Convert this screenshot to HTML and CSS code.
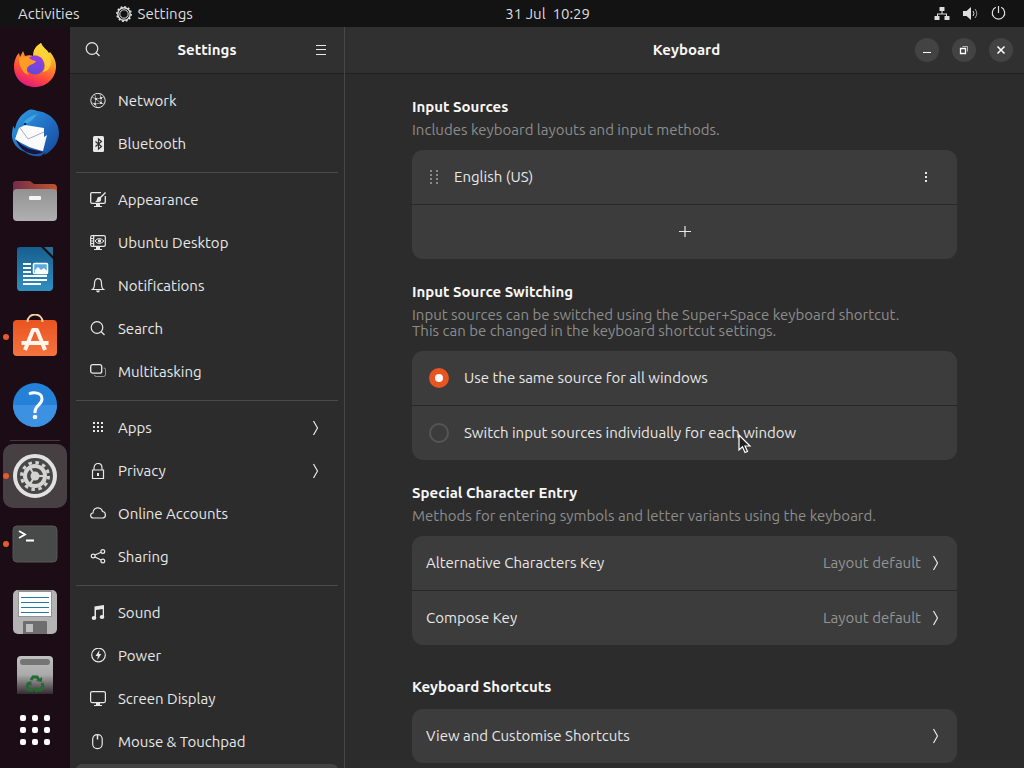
FILE: index.html
```
<!DOCTYPE html>
<html lang="en">
<head>
    <meta charset="UTF-8">
    <meta name="viewport" content="width=device-width, initial-scale=1.0">
    <title>Settings - Keyboard</title>
    <link rel="stylesheet" href="styles.css">
</head>
<body>
    <!-- Shared icons -->
    <svg class="sprite" aria-hidden="true">
        <symbol id="chevron" viewBox="0 0 8 16"><path d="M1.500 1l4 7-4 7" fill="none" stroke="currentColor" stroke-width="1.2"/></symbol>
        <symbol id="search" viewBox="0 0 16 16"><g fill="none" stroke="currentColor" stroke-width="1.2"><circle cx="7" cy="6.5" r="5.8"/><path d="M11 10.5l3.5 3.5"/></g></symbol>
    </svg>

    <header class="topbar">
        <div class="topbar-left">
            <button class="plain">Activities</button>
            <button class="plain app-menu">
                <svg width="16" height="16" viewBox="0 0 16 16" fill="none" stroke="currentColor"><circle cx="8" cy="8" r="6.2" stroke-width="1.4"/><circle cx="8" cy="8" r="4.2"/><circle cx="8" cy="8" r="7.2" stroke-width="1.5" stroke-dasharray="1.9 1.87"/></svg>
                Settings
            </button>
        </div>
        <button class="plain clock">31 Jul  10:29</button>
        <div class="topbar-right">
            <svg width="16" height="16" viewBox="0 0 16 16" fill="currentColor"><rect x="5.5" y="1" width="5" height="4" rx=".5"/><rect x=".5" y="10" width="5" height="4" rx=".5"/><rect x="10.5" y="10" width="5" height="4" rx=".5"/><path d="M7.5 5h1v2.500H13V10h-1V8.500H4V10H3V7.500h4.500z"/></svg>
            <svg width="16" height="16" viewBox="0 0 16 16"><path d="M1 5h3.500L9 1v13l-4.500-4H1z" fill="currentColor"/><g fill="none" stroke="currentColor"><path d="M11 5q2 2.500 0 5"/><path d="M13 3q3.500 4.500 0 9" stroke-opacity=".7"/></g></svg>
            <svg width="16" height="16" viewBox="0 0 16 16" fill="none" stroke="currentColor" stroke-width="1.2"><path d="M8.500 0v7M5.800 1.300a6.200 6.200 0 1 0 5.400 0"/></svg>
        </div>
    </header>

    <div class="desktop">
        <nav class="dock" aria-label="Dock">
            <button class="dock-item" aria-label="Firefox">
                <svg width="44" height="44" viewBox="0 0 44 44">
                    <defs>
                        <linearGradient id="fx" x1=".75" y1="0" x2=".3" y2="1"><stop offset="0" stop-color="#fff44f"/><stop offset=".35" stop-color="#ff9a26"/><stop offset=".7" stop-color="#ff4a3c"/><stop offset="1" stop-color="#e31587"/></linearGradient>
                        <linearGradient id="fxc" x1=".6" y1="0" x2=".4" y2="1"><stop offset="0" stop-color="#9a3de0"/><stop offset="1" stop-color="#5b4bd8"/></linearGradient>
                    </defs>
                    <path d="M28 0c2 5 6 6 8 10l1-1c4 5 6 9 6 14 0 12-9 21-21 21S1 35 1 24c0-6 2-11 5-14l1 4 3-6 2 5c3-1 6-1 8 0 0-6 3-10 8-13z" fill="url(#fx)"/>
                    <circle cx="22" cy="22" r="9.5" fill="url(#fxc)"/>
                    <path d="M28 0c-5 3-8 7-7 12 4 0 8 2 9 5 3 5 2 9 0 12 5-1 8-5 8-10 0-4-1-6-3-9-3-4-6-6-7-10z" fill="#ffd63a" opacity=".85"/>
                    <path d="M6 15c4-3 9-1 13 2l4 1c-1 3-5 3-7 5-3 2-3 6 0 9-7-2-10-9-10-17z" fill="#ff9b27"/>
                </svg>
            </button>
            <button class="dock-item" aria-label="Thunderbird">
                <svg width="48" height="48" viewBox="0 0 48 48">
                    <defs><linearGradient id="tb" x1="0" y1="0" x2="1" y2="1"><stop offset="0" stop-color="#2fa0e8"/><stop offset=".6" stop-color="#1f68bd"/><stop offset="1" stop-color="#174593"/></linearGradient></defs>
                    <path d="M16 2c4-3 8-1 10 0 12 1 22 10 22 22 0 11-8 19-15 22l2-3-5 4c-5 1-11 0-16-4C5 40 0 32 1 24l1-7 2 3c1-7 5-14 12-18z" fill="url(#tb)"/>
                    <path d="M4 27c3 7 9 11 15 13l13 3c-7 4-15 2-21-3-4-4-6-8-7-13z" fill="#1a1436"/>
                    <path d="M8 19l6-3 19 3v9l3-2-4 16c-9-2-18-5-28-12z" fill="#fbfbfc"/>
                    <path d="M9 19l8 11 16-7" fill="none" stroke="#a9acb8"/>
                    <path d="M12 15c2-5 7-8 15-10-4 3-5 6-10 9z" fill="#3fa6e0"/><circle cx="14" cy="15" r="1.3" fill="#102b52"/>
                </svg>
            </button>
            <button class="dock-item" aria-label="Files">
                <svg width="46" height="44" viewBox="0 0 46 44">
                    <defs><linearGradient id="fold"><stop offset="0" stop-color="#742d48"/><stop offset="1" stop-color="#c3532f"/></linearGradient><linearGradient id="fg" x2="0" y2="1"><stop offset="0" stop-color="#929292"/><stop offset="1" stop-color="#b0b0b0"/></linearGradient></defs>
                    <path d="M1 5q0-3 3-3h14l4 3h19q4 0 4 4v10H1z" fill="url(#fold)"/>
                    <rect x="1" y="10" width="44" height="32" rx="4" fill="url(#fg)"/><rect x="17" y="17" width="12" height="4" rx="1" fill="#f5f5f5"/>
                </svg>
            </button>
            <button class="dock-item" aria-label="LibreOffice Writer">
                <svg width="38" height="46" viewBox="0 0 38 46">
                    <defs><linearGradient id="wr" x2="0" y2="1"><stop offset="0" stop-color="#155f8f"/><stop offset="1" stop-color="#308fc0"/></linearGradient></defs>
                    <path d="M4 1h21l12 12v28q0 4-4 4H4q-3 0-3-4V4q0-3 3-3z" fill="url(#wr)"/><path d="M28 1h9v9z" fill="#276d96"/>
                    <path d="M7 18h8M7 22h8M7 26h8M7 30h24M7 34h24M7 38h18" stroke="#fff" stroke-width="2"/>
                    <rect x="17.5" y="17.5" width="14" height="10" rx="1" fill="#5ba8e2" stroke="#fff" stroke-width="1.5"/><path d="M19 27v-3l3-3 3 3 3-2 3 3v2z" fill="#fff"/>
                </svg>
            </button>
            <button class="dock-item running" aria-label="Ubuntu Software">
                <svg width="46" height="46" viewBox="0 0 46 46">
                    <defs><linearGradient id="sw" x2="0" y2="1"><stop offset="0" stop-color="#e95420"/><stop offset="1" stop-color="#f4743f"/></linearGradient></defs>
                    <rect x="1" y="6" width="44" height="36" rx="4" fill="url(#sw)"/>
                    <path d="M15.500 8c0-10 15-10 15 0" fill="none" stroke="#f4cda2" stroke-width="2"/>
                    <path d="M13 36l8-20h4l8 20M9.500 29h27" fill="none" stroke="#fff5ec" stroke-width="4" stroke-linejoin="round"/>
                </svg>
            </button>
            <button class="dock-item" aria-label="Help">
                <svg width="46" height="46" viewBox="0 0 46 46">
                    <circle cx="23" cy="23" r="22" fill="#2580d8"/><path d="M1 23h44a22 22 0 0 1-44 0z" fill="#3d91e2"/>
                    <path d="M17 12c4-2 13-2 13 5 0 6-7 6-7 13v1" fill="none" stroke="#fff" stroke-width="3"/><circle cx="23" cy="35" r="2.3" fill="#fff"/>
                </svg>
            </button>
            <hr class="dock-separator">
            <button class="dock-item running focused" aria-label="Settings">
                <svg width="46" height="46" viewBox="0 0 46 46" fill="none">
                    <circle cx="23" cy="23" r="20" fill="#484748" stroke="#e2e1e1" stroke-width="4"/>
                    <circle cx="23" cy="23" r="13.5" stroke="#d4d4d2" stroke-width="3" stroke-dasharray="3.5 3.57"/>
                    <circle cx="23" cy="23" r="10" stroke="#d4d4d2" stroke-width="4"/>
                    <circle cx="23" cy="23" r="4.5" fill="#d4d4d2"/>
                    <path d="M23 23h9M23 23l-5-8M23 23l-5 8" stroke="#d4d4d2" stroke-width="2"/>
                </svg>
            </button>
            <button class="dock-item running" aria-label="Terminal">
                <svg width="46" height="38" viewBox="0 0 46 38">
                    <rect x="1" y="1" width="44" height="36" rx="4" fill="#484a49" stroke="#555"/>
                    <path d="M7 6l6 3.500L7 13M14 15.500h8" fill="none" stroke="#fff" stroke-width="1.8"/>
                </svg>
            </button>
            <button class="dock-item" aria-label="Floppy disk">
                <svg width="46" height="46" viewBox="0 0 46 46">
                    <rect x="1" y="1" width="44" height="44" rx="5" fill="#b4b3b3"/><path d="M6 1h34v27H6z" fill="#929292"/><path d="M7 3h32v24H7z" fill="#fff"/>
                    <path d="M9 8.500h28M9 13.500h28M9 18.500h28M9 23.500h28" stroke="#257ba3"/>
                    <path d="M11 33q0-1 1-1h22q1 0 1 1v12H11z" fill="#6e6e6e"/><path d="M14 35h7v8h-7z" fill="#bdbdbd"/>
                </svg>
            </button>
            <button class="dock-item trash" aria-label="Trash">
                <svg width="38" height="39" viewBox="0 0 38 39">
                    <defs><linearGradient id="tr" x2="0" y2="1"><stop offset="0" stop-color="#c2c1c1"/><stop offset=".5" stop-color="#aaa"/><stop offset="1" stop-color="#332b30"/></linearGradient></defs>
                    <path d="M1 39V5q0-4 4-4h28q4 0 4 4v34z" fill="url(#tr)"/><rect x="4" y="4" width="30" height="6" rx="3" fill="#747474"/>
                    <path d="M15 25l2-3h4l2 3M26 28l1 3-2 4h-4M17 35h-4l-2-4 2-3" fill="none" stroke="#256b31" stroke-width="3"/><path d="M20 26l6 1v-5zM21 32v6l-3-3zM10 28l5-2 1 5z" fill="#256b31"/>
                </svg>
            </button>
            <button class="dock-item" aria-label="Show Applications">
                <svg width="32" height="32" viewBox="0 0 32 32" fill="#fff"><rect x="1" y="1" width="6" height="6" rx="2"/><rect x="13" y="1" width="6" height="6" rx="2"/><rect x="25" y="1" width="6" height="6" rx="2"/><rect x="1" y="13" width="6" height="6" rx="2"/><rect x="13" y="13" width="6" height="6" rx="2"/><rect x="25" y="13" width="6" height="6" rx="2"/><rect x="1" y="25" width="6" height="6" rx="2"/><rect x="13" y="25" width="6" height="6" rx="2"/><rect x="25" y="25" width="6" height="6" rx="2"/></svg>
            </button>
        </nav>

        <aside class="sidebar">
            <div class="headerbar">
                <button class="plain" aria-label="Search"><svg width="16" height="16"><use href="#search"/></svg></button>
                <h1>Settings</h1>
                <button class="plain menu-btn" aria-label="Menu"><svg width="16" height="16" viewBox="0 0 16 16" stroke="currentColor"><path d="M3 3.500h10M3 7.500h10M3 12.500h10"/></svg></button>
            </div>
            <nav class="panels" aria-label="Settings panels">
                <a href="#"><svg width="16" height="16" viewBox="0 0 16 16" fill="none" stroke="currentColor"><circle cx="8" cy="7.5" r="7.2"/><path d="M2 4l4 2 5-1 3-1M6 6l-1 5 6-1V5M2 10l3 1 2 4M11 10l3 1M6 6l5 4M5 2l1 4M10 1l1 4" stroke-width=".6"/><g fill="currentColor" stroke="none"><circle cx="6" cy="6" r="1.1"/><circle cx="11" cy="5" r="1.1"/><circle cx="5" cy="11" r="1.1"/><circle cx="11" cy="10" r="1.1"/></g></svg>Network</a>
                <a href="#"><svg width="16" height="16" viewBox="0 0 16 16"><rect x="3" width="11" height="16" rx="1.5" fill="currentColor"/><path d="M5.500 5.500l6 5-3 2.500V3l3 2.500-6 5" fill="none" stroke="#2c2c2c" stroke-width="1.2"/></svg>Bluetooth</a>
                <hr>
                <a href="#"><svg width="16" height="16" viewBox="0 0 16 16"><path d="M11 .7H2Q.7.700.7 2v8q0 1.300 1.300 1.300h12q1.300 0 1.300-1.300V4" fill="none" stroke="currentColor" stroke-width="1.3"/><path d="M6 12h4v2h2v1H4v-1h2zM15 0l1 1-5 5q1 4-3 4H5q2-1 2-3 1-3 3-2z" fill="currentColor"/></svg>Appearance</a>
                <a href="#"><svg width="16" height="16" viewBox="0 0 16 16"><path d="M2 .7h12q1.300 0 1.300 1.300v8q0 1.300-1.300 1.300H2Q.7 11.300.7 10V2Q.7.700 2 .7zM3.700 1v10M1 3.500h3M1 6h3M1 8.500h3" fill="none" stroke="currentColor" stroke-width="1.2"/><path d="M5 6q4-5 9 0-5 5-9 0z" fill="none" stroke="currentColor"/><circle cx="9.5" cy="6" r="1.7" fill="currentColor"/><path d="M6 12h4v2h2v1H4v-1h2z" fill="currentColor"/></svg>Ubuntu Desktop</a>
                <a href="#"><svg width="16" height="16" viewBox="0 0 16 16"><path d="M2.500 11.500c1.500-1 2-3 2-6C4.500 2 6 .7 8 .7S11.500 2 11.500 5.500c0 3 .5 5 2 6z" fill="none" stroke="currentColor" stroke-width="1.2"/><path d="M6 12.500h4q-.5 2-2 2t-2-2z" fill="currentColor"/></svg>Notifications</a>
                <a href="#"><svg width="16" height="16"><use href="#search"/></svg>Search</a>
                <a href="#"><svg width="16" height="16" viewBox="0 0 16 16" fill="none" stroke="currentColor"><path d="M13.500 4h.5q1.500 0 1.500 1.500v5q0 2-2 2h-7q-2 0-2-1.500" opacity=".55"/><rect x=".7" y=".7" width="11" height="8.5" rx="2" stroke-width="1.3"/></svg>Multitasking</a>
                <hr>
                <a href="#"><svg width="16" height="16" viewBox="0 0 16 16" fill="currentColor"><path d="M3 2h2v2H3zM7 2h2v2H7zM11 2h2v2h-2zM3 6h2v2H3zM7 6h2v2H7zM11 6h2v2h-2zM3 10h2v2H3zM7 10h2v2H7zM11 10h2v2h-2z"/></svg>Apps<svg class="chevron" width="8" height="16"><use href="#chevron"/></svg></a>
                <a href="#"><svg width="16" height="16" viewBox="0 0 16 16" fill="none" stroke="currentColor" stroke-width="1.2"><path d="M2.500 7h11v8.500h-11zM4 7V5c0-6 8-6 8 0v2"/><path d="M8 10v3" stroke-width="2"/></svg>Privacy<svg class="chevron" width="8" height="16"><use href="#chevron"/></svg></a>
                <a href="#"><svg width="16" height="16" viewBox="0 0 16 16" fill="none" stroke="currentColor" stroke-width="1.2"><path d="M3.500 12C0 12-.3 7.300 3 7c0-6 8-7 9.500-1.500C16.500 6 16.300 12 12.500 12z"/></svg>Online Accounts</a>
                <a href="#"><svg width="16" height="16" viewBox="0 0 16 16" fill="none" stroke="currentColor" stroke-width="1.2"><circle cx="3.2" cy="7" r="1.9"/><circle cx="12.8" cy="2.5" r="1.9"/><circle cx="12.8" cy="12" r="1.9"/><path d="M5 6l6-2.800M5 8l6 3"/></svg>Sharing</a>
                <hr>
                <a href="#"><svg width="16" height="16" viewBox="0 0 16 16" fill="currentColor"><path d="M4.500 1.500L14 0v12h-1.300V4L6 5v9H4.500z"/><ellipse cx="4" cy="13" rx="2.3" ry="2"/><ellipse cx="12" cy="12" rx="2.3" ry="2"/></svg>Sound</a>
                <a href="#"><svg width="16" height="16" viewBox="0 0 16 16"><circle cx="8.5" cy="7" r="6.8" fill="none" stroke="currentColor" stroke-width="1.2"/><path d="M9.500 2l-4 6h2.300l-.5 4 4-6H9z" fill="currentColor"/></svg>Power</a>
                <a href="#"><svg width="16" height="16" viewBox="0 0 16 16"><rect x=".6" y=".6" width="14.8" height="11" rx="1.5" fill="none" stroke="currentColor" stroke-width="1.2"/><path d="M6 12h4v2h2v1H4v-1h2z" fill="currentColor"/></svg>Screen Display</a>
                <a href="#"><svg width="16" height="16" viewBox="0 0 16 16" fill="none" stroke="currentColor"><rect x="2.7" y=".6" width="9.5" height="14" rx="4.5" stroke-width="1.2"/><path d="M7.500 1v4.500" stroke-width="1.5"/></svg>Mouse &amp; Touchpad</a>
                <a href="#" class="selected" aria-current="page" aria-label="Keyboard"></a>
            </nav>
        </aside>

        <main class="window">
            <div class="headerbar">
                <span></span>
                <h1>Keyboard</h1>
                <div class="window-controls">
                    <button aria-label="Minimise"><svg width="24" height="24" viewBox="0 0 24 24" stroke="currentColor"><path d="M8 14.500h8"/></svg></button>
                    <button aria-label="Restore"><svg width="24" height="24" viewBox="0 0 24 24" fill="none" stroke="currentColor"><path d="M10.500 8.500h5v5" opacity=".6"/><path d="M8.500 10.500h5v5h-5z" stroke-width="1.3"/></svg></button>
                    <button aria-label="Close"><svg width="24" height="24" viewBox="0 0 24 24" stroke="currentColor" stroke-width="1.5"><path d="M8.500 8.500l7 7M15.500 8.500l-7 7"/></svg></button>
                </div>
            </div>

            <div class="content">
                <section class="group">
                    <h2>Input Sources</h2>
                    <p>Includes keyboard layouts and input methods.</p>
                    <div class="card">
                        <div class="row source">
                            <svg width="10" height="16" viewBox="0 0 10 16" fill="#8a8a8a"><path d="M1 1h2v2H1zM7 1h2v2H7zM1 5h2v2H1zM7 5h2v2H7zM1 9h2v2H1zM7 9h2v2H7zM1 13h2v2H1zM7 13h2v2H7z"/></svg>
                            <span>English (US)</span>
                            <button class="plain end" aria-label="More options"><svg width="16" height="16" viewBox="0 0 16 16" fill="currentColor"><path d="M7 3h2v2H7zM7 7h2v2H7zM7 11h2v2H7z"/></svg></button>
                        </div>
                        <button class="row add" aria-label="Add input source"><svg width="16" height="16" viewBox="0 0 16 16" stroke="currentColor"><path d="M2 7.500h12M8 2v11" stroke-width="1.2"/></svg></button>
                    </div>
                </section>

                <section class="group">
                    <h2>Input Source Switching</h2>
                    <p>Input sources can be switched using the Super+Space keyboard shortcut.<br>This can be changed in the keyboard shortcut settings.</p>
                    <div class="card">
                        <label class="row option"><input type="radio" name="switching" checked>Use the same source for all windows</label>
                        <label class="row option"><input type="radio" name="switching">Switch input sources individually for each window</label>
                    </div>
                </section>

                <section class="group">
                    <h2>Special Character Entry</h2>
                    <p>Methods for entering symbols and letter variants using the keyboard.</p>
                    <div class="card">
                        <button class="row">Alternative Characters Key<span class="value end">Layout default</span><svg width="8" height="16"><use href="#chevron"/></svg></button>
                        <button class="row">Compose Key<span class="value end">Layout default</span><svg width="8" height="16"><use href="#chevron"/></svg></button>
                    </div>
                </section>

                <section class="group shortcuts">
                    <h2>Keyboard Shortcuts</h2>
                    <div class="card">
                        <button class="row">View and Customise Shortcuts<svg class="end" width="8" height="16"><use href="#chevron"/></svg></button>
                    </div>
                </section>
            </div>
        </main>
    </div>

    <svg class="pointer" width="14" height="20" viewBox="0 0 14 20" aria-hidden="true"><path d="M1 1v15l3.500-3.200L7 18.500l2.500-1L7 12h5z" fill="#222" stroke="#fff" stroke-width="1.2"/></svg>
</body>
</html>
```
FILE: styles.css
```
* {
    margin: 0;
    padding: 0;
    box-sizing: border-box;
}

body {
    height: 100vh;
    display: flex;
    flex-direction: column;
    overflow: hidden;
    background-color: #2c2c2c;
    color: #e8e8e8;
    font-family: Ubuntu, 'Open Sans', 'Noto Sans', sans-serif;
    font-size: 15px;
    line-height: 20px;
}

button {
    border: none;
    background: none;
    color: inherit;
    font: inherit;
}

a {
    color: inherit;
    text-decoration: none;
}

svg {
    display: block;
    flex: none;
}

.sprite {
    position: absolute;
    width: 0;
    height: 0;
}

/* Top bar */
.topbar {
    flex: none;
    height: 27px;
    padding: 0 18px;
    display: flex;
    align-items: center;
    background-color: #131313;
    color: #dedede;
}

.topbar-left {
    flex: 1;
    display: flex;
    gap: 36px;
}

.app-menu {
    display: flex;
    align-items: center;
    gap: 6px;
}

.clock {
    white-space: pre;
}

.topbar-right {
    width: 416px;
    display: flex;
    justify-content: flex-end;
    gap: 12px;
}

.desktop {
    flex: 1;
    min-height: 0;
    display: flex;
}

/* Dock */
.dock {
    flex: none;
    width: 70px;
    padding: 4px 3px;
    display: flex;
    flex-direction: column;
    overflow: hidden;
    background-color: #1b0c16;
}

.dock-item {
    flex: none;
    position: relative;
    height: 64px;
    margin: 2px 0;
    border-radius: 10px;
    display: flex;
    align-items: center;
    justify-content: center;
}

.dock-item.focused {
    background-color: #464043;
}

.dock-item.running::before {
    content: '';
    position: absolute;
    left: 0;
    top: 29px;
    width: 6px;
    height: 6px;
    border-radius: 50%;
    background-color: #e65a2b;
}

.dock-item.trash {
    height: 46px;
    align-items: flex-end;
}

.dock-separator {
    flex: none;
    height: 1px;
    margin: 1px 7px;
    border: none;
    background-color: #443940;
}

/* Header bars */
.headerbar {
    flex: none;
    height: 47px;
    padding: 0 11px 0 15px;
    display: grid;
    grid-template-columns: 1fr auto 1fr;
    align-items: center;
    background-color: #303030;
    border-bottom: 1px solid #1f1f1f;
}

h1,
h2 {
    font-size: 15px;
    font-weight: 600;
    color: #f7f7f7;
}

.menu-btn {
    justify-self: end;
}

.window-controls {
    display: flex;
    justify-content: flex-end;
    gap: 13px;
}

.window-controls button {
    border-radius: 50%;
    background-color: #434343;
    color: #fff;
}

/* Sidebar */
.sidebar {
    flex: none;
    width: 275px;
    display: flex;
    flex-direction: column;
    border-right: 1px solid #474747;
}

.sidebar .headerbar {
    padding: 0 15px;
}

.panels {
    flex: 1;
    min-height: 0;
    padding: 5px 6px;
    overflow-y: auto;
    scrollbar-width: none;
}

.panels a {
    height: 43px;
    padding: 0 18px 0 14px;
    display: flex;
    align-items: center;
    gap: 12px;
}

.panels .chevron {
    margin-left: auto;
}

.panels .selected {
    margin-top: 1px;
    border-radius: 6px;
    background-color: #434343;
}

.panels hr {
    height: 1px;
    margin: 7px 0 5px;
    border: none;
    background-color: #4a4a4a;
}

/* Keyboard panel */
.window {
    flex: 1;
    min-width: 0;
    display: flex;
    flex-direction: column;
}

.content {
    flex: 1;
    min-height: 0;
    padding: 23px 24px;
    overflow-y: auto;
    scrollbar-width: none;
}

.group {
    max-width: 545px;
    margin: 0 auto 23px;
}

.group p {
    margin-top: 5px;
    line-height: 16px;
    color: #8c8c8c;
}

.shortcuts {
    margin-top: 32px;
}

.card {
    margin-top: 12px;
    border-radius: 11px;
    overflow: hidden;
    background-color: #3c3c3c;
}

.row {
    width: 100%;
    height: 54px;
    padding: 0 17px 0 14px;
    display: flex;
    align-items: center;
    gap: 11px;
    text-align: left;
}

.row + .row {
    height: 55px;
    border-top: 1px solid #272727;
}

.row .end {
    margin-left: auto;
}

.source {
    padding: 0 23px 0 17px;
    gap: 15px;
}

.row.add {
    padding: 0 15px;
    justify-content: center;
}

.option {
    padding-left: 17px;
    gap: 15px;
}

.option input {
    appearance: none;
    width: 20px;
    height: 20px;
    border: 2px solid #555;
    border-radius: 50%;
}

.option input:checked {
    border: 6px solid #e95420;
    background-color: #fff;
}

.value {
    color: #949494;
}

.pointer {
    position: absolute;
    left: 738px;
    top: 434px;
}
```
